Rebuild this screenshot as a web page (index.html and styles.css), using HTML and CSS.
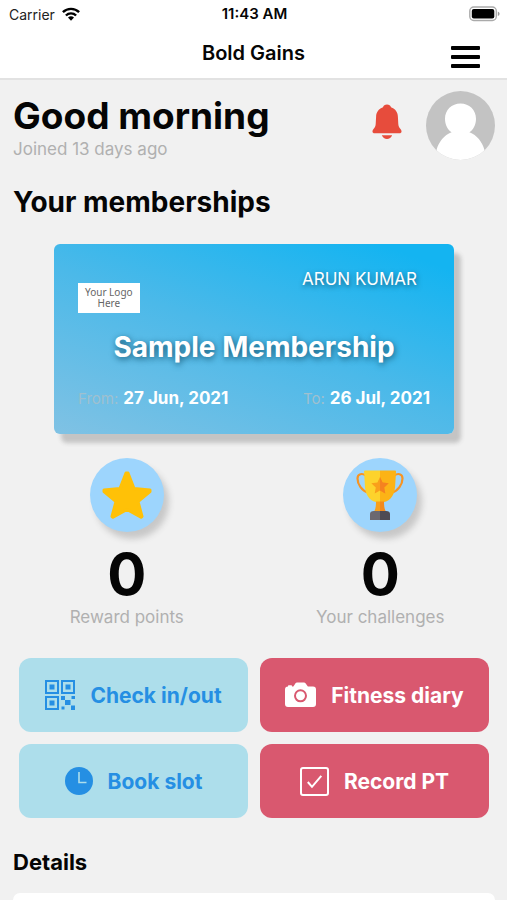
FILE: index.html
```html
<!DOCTYPE html>
<html lang="en">
<head>
<meta charset="utf-8">
<meta name="viewport" content="width=device-width, initial-scale=1">
<title>Bold Gains</title>
<link rel="stylesheet" href="styles.css">
</head>
<body>
<div class="status">
  <span class="carrier">Carrier
    <svg width="18" height="14" viewBox="0 0 18 14" aria-hidden="true"><g fill="none" stroke="#000" stroke-width="2.4"><path d="M.9 5.2a11.5 11.5 0 0 1 16.2 0"/><path d="M3.9 8.5a7.2 7.2 0 0 1 10.2 0"/></g><path d="M6 10.6a4.3 4.3 0 0 1 6 0L9 13.8z"/></svg>
  </span>
  <span class="time">11:43 AM</span>
  <svg class="battery" width="31" height="16" viewBox="0 0 31 16" aria-hidden="true"><rect x=".8" y="1" width="26.5" height="13.5" rx="4" fill="#fff" stroke="#aaa" stroke-width="1.4"/><rect x="2.8" y="3" width="22.5" height="9.5" rx="2"/><path d="M28.8 5.5q1.8.7 1.8 2.3t-1.8 2.3z" fill="#999"/></svg>
</div>
<header class="navbar">
  <h1 class="brand">Bold Gains</h1>
  <button class="menu" type="button" aria-label="Menu"><span></span><span></span><span></span></button>
</header>
<main class="page">
  <section class="greeting">
    <div class="hello">
      <h2 class="title">Good morning</h2>
      <p class="muted">Joined 13 days ago</p>
    </div>
    <button class="bell" type="button" aria-label="Notifications">
      <svg width="30" height="36" viewBox="0 0 30 36"><path fill="#e74c3c" d="M15 .5c2.200 0 3.400 1 4 2.800 4.500 1.600 6.700 5 6.900 9.500l.4 7.200c.1 2.200.9 3.500 2.200 5 1.800 2.200 1.200 4.200-1.300 4.200H2.800C.3 29.200-.3 27.200 1.500 25c1.300-1.500 2.100-2.800 2.200-5l.4-7.200C4.300 8.300 6.500 4.900 11 3.300 11.600 1.500 12.800.5 15 .5zM9.800 31.300h10.400c-1 2.400-2.900 3.700-5.200 3.700s-4.200-1.300-5.200-3.700z"/></svg>
    </button>
    <svg class="avatar" width="69" height="69" viewBox="0 0 69 69" role="img" aria-label="Profile"><defs><clipPath id="round"><circle cx="34.500" cy="34.500" r="34.500"/></clipPath></defs><g clip-path="url(#round)"><rect width="69" height="69" fill="#c3c3c3"/><path fill="#fff" d="M34.500 12.500c8.800 0 15.500 6.500 15.500 15.200 0 6.200-2.600 10.900-6.600 13.600C51 44.200 56 50.500 58.500 59L55 69H14l-3.500-10C13 50.500 18 44.200 25.600 41.300 21.600 38.600 19 33.900 19 27.700c0-8.700 6.700-15.200 15.500-15.200z"/></g></svg>
  </section>

  <h2 class="section-title">Your memberships</h2>
  <article class="card">
    <div class="card-top">
      <div class="logo"><span>Your Logo</span><span>Here</span></div>
      <span class="member">ARUN KUMAR</span>
    </div>
    <h3 class="plan">Sample Membership</h3>
    <div class="dates">
      <span><small>From:</small> <b>27 Jun, 2021</b></span>
      <span><small>To:</small> <b>26 Jul, 2021</b></span>
    </div>
  </article>

  <section class="stats">
    <div class="stat">
      <span class="badge"><svg width="50" height="48" viewBox="0 0 50 48" aria-hidden="true"><path fill="#ffc107" stroke="#ffc107" stroke-width="3" stroke-linejoin="round" d="M24 2h2l6 15.500L48 19v1.500L36 30.500 40 45.500l-1 .8L25 38.500l-14 7.800-1-.8L14 30.500 2 20.500V19l16-1.500z"/></svg></span>
      <strong class="count">0</strong>
      <span class="muted">Reward points</span>
    </div>
    <div class="stat">
      <span class="badge"><svg width="48" height="50" viewBox="0 0 48 50" aria-hidden="true"><g fill="none" stroke="#f79423" stroke-width="2.200"><path d="M9.500 5.500C6.500 3 1.500 3.500 1.500 8.500c0 6 4.500 12.500 10.500 14"/><path d="M38.500 5.500c3-2.500 8-2 8 3 0 6-4.500 12.500-10.500 14"/></g><path fill="#fdd32c" d="M8 1.500Q8 .5 9 .5h15v32c-9 0-14-6-15-15z"/><path fill="#fcb316" d="M24 .5h15q1 0 1 1l-1 16c-1 9-6 15-15 15z"/><path fill="#f9a01b" d="M20 31.500h4V42h-6c1.500-3 2-6 2-10.500z"/><path fill="#f28a1c" d="M24 31.500h4c0 4.500.5 7.500 2 10.500h-6z"/><path fill="#f9a01b" d="m24 7 2.600 5.500 6.100.8-4.500 4.200 1.100 6L24 20.600l-5.300 2.900 1.100-6-4.500-4.200 6.100-.8z"/><path fill="#f58220" d="m24 7 2.600 5.500 6.100.8-4.500 4.200 1.100 6L24 20.600z"/><path fill="#6b6870" d="M18 41h6v9H14v-6q0-3 4-3z"/><path fill="#4e4b53" d="M24 41h6q4 0 4 3v6H24z"/></svg></span>
      <strong class="count">0</strong>
      <span class="muted">Your challenges</span>
    </div>
  </section>

  <nav class="actions">
    <button class="action blue" type="button"><svg width="30" height="30" viewBox="0 0 30 30" aria-hidden="true"><g fill="none" stroke="currentColor" stroke-width="2"><rect x="1" y="1" width="12" height="12"/><rect x="17" y="1" width="12" height="12"/><rect x="1" y="17" width="12" height="12"/></g><path fill="currentColor" d="M4.500 4.500h5v5h-5zM20.500 4.500h5v5h-5zM4.500 20.500h5v5h-5zM16 16h4v4h-4zM20 20h5.500v5H20zM26.500 16H30v3h-3.500zM16.500 26.500h3v3h-3zM26 25.500h4v4.500h-4z"/></svg>Check in/out</button>
    <button class="action red" type="button"><svg width="31" height="26" viewBox="0 0 31 26" aria-hidden="true"><path fill="currentColor" d="M10.500 1.200Q11 .5 12 .5h7q1 0 1.500.7l2 2.800q.3.500 1 .5H28q3 0 3 3V22q0 3-3 3H3q-3 0-3-3V7.500q0-3 3-3V4q0-.7.7-.7h2.600q.7 0 .7.700v.500h.8q.6 0 .9-.5z"/><circle cx="15.500" cy="13.800" r="5.500" fill="none" stroke="#d9586f" stroke-width="2"/></svg>Fitness diary</button>
    <button class="action blue" type="button"><svg width="28" height="28" viewBox="0 0 28 28" aria-hidden="true"><circle cx="14" cy="14" r="14" fill="currentColor"/><path d="M14 5v10.500h7.500" fill="none" stroke="#addeeb" stroke-width="1.600"/></svg>Book slot</button>
    <button class="action red" type="button"><svg width="29" height="29" viewBox="0 0 29 29" aria-hidden="true"><g fill="none" stroke="currentColor" stroke-width="2"><rect x="1" y="1" width="27" height="27" rx="2"/><path d="m7.800 15 4.200 4.800 9.300-11"/></g></svg>Record PT</button>
  </nav>

  <h2 class="details-title">Details</h2>
  <section class="details" aria-label="Details"></section>
</main>
</body>
</html>
```
FILE: styles.css
```css
* { box-sizing: border-box; margin: 0; }

body {
  display: flex;
  flex-direction: column;
  min-height: 100vh;
  background: #f1f1f1;
  color: #050505;
  font-family: Inter, "Liberation Sans", sans-serif;
}

button {
  border: 0;
  background: none;
  font: inherit;
  cursor: pointer;
}

svg { display: block; flex: none; }

.status {
  display: grid;
  grid-template-columns: 1fr auto 1fr;
  align-items: center;
  height: 28px;
  padding: 0 7px 0 9px;
  background: #fff;
  font-size: 14px;
}
.carrier { display: flex; align-items: center; gap: 7px; color: #222; }
.time { font-size: 15px; font-weight: 600; line-height: 18px; }
.battery { justify-self: end; }

.navbar {
  display: grid;
  grid-template-columns: 1fr auto 1fr;
  align-items: center;
  height: 52px;
  padding: 0 27px;
  border-bottom: 2px solid #e2e2e2;
  background: #fff;
}
.brand {
  grid-column: 2;
  font-size: 20px;
  font-weight: 600;
  line-height: 24px;
}
.menu {
  display: grid;
  gap: 5px;
  justify-self: end;
  padding: 8px 0 0;
}
.menu span { width: 29px; height: 4px; border-radius: 1px; background: #000; }

.page {
  display: flex;
  flex: 1;
  flex-direction: column;
  padding: 0 12px 0 13px;
}

.greeting { display: flex; align-items: center; padding-top: 11px; }
.hello { flex: 1; }
.title { font-size: 37px; line-height: 46px; }
.muted { color: #b0b0b0; font-size: 17px; line-height: 20px; }
.bell { margin-right: 24px; padding: 0 0 8px; }

.section-title { margin-top: 24px; font-size: 28px; line-height: 36px; }

.card {
  width: 400px;
  max-width: 100%;
  margin: 24px auto 0;
  padding: 24px 24px 23px;
  border-radius: 6px;
  background: linear-gradient(200deg, #14b4f1 8%, #4bb9e9 50%, #80c2e4);
  box-shadow: 7px 9px 4px #c4c4c4;
  color: #fff;
}
.card-top { display: flex; justify-content: space-between; }
.logo {
  display: flex;
  flex-direction: column;
  align-items: center;
  margin-top: 15px;
  padding: 4px 7px;
  background: #fff;
  color: #666;
  font: 10px/11px "Noto Sans", sans-serif;
}
.member {
  padding-right: 13px;
  font-size: 17px;
  line-height: 22px;
  text-shadow: 1px 2px 5px #17607f;
}
.plan {
  margin-top: 16px;
  font-size: 28px;
  line-height: 36px;
  text-align: center;
  text-shadow: 1px 2px 6px #175d7b;
}
.dates { display: flex; justify-content: space-between; margin-top: 21px; line-height: 24px; }
.dates span { display: flex; align-items: baseline; gap: 5px; }
.dates small { color: #9fc0cf; font-size: 15px; }
.dates b { font-size: 17px; }

.stats {
  display: grid;
  grid-template-columns: 1fr 1fr;
  margin: 24px -12px 0 -13px;
}
.stat { display: flex; flex-direction: column; align-items: center; }
.badge {
  display: grid;
  place-items: center;
  width: 74px;
  height: 74px;
  border-radius: 50%;
  background: #9dd5fd;
  box-shadow: 5px 7px 6px #c8c8c8;
}
.count { margin-top: 10px; font-size: 58px; line-height: 64px; }
.stat .muted { margin-top: 1px; }

.actions {
  display: grid;
  grid-template-columns: 1fr 1fr;
  gap: 12px;
  margin-top: 31px;
  padding: 0 6px;
}
.action {
  display: flex;
  align-items: center;
  justify-content: center;
  gap: 15px;
  height: 74px;
  padding: 0;
  border-radius: 12px;
  font-size: 21px;
  font-weight: 700;
}
.blue { background: #addeeb; color: #258fe3; }
.red { background: #d9586f; color: #fff; }

.details-title { margin-top: 30px; font-size: 22px; line-height: 28px; }
.details {
  flex: 1;
  margin-top: 17px;
  border-radius: 12px 12px 0 0;
  background: #fff;
}
```
